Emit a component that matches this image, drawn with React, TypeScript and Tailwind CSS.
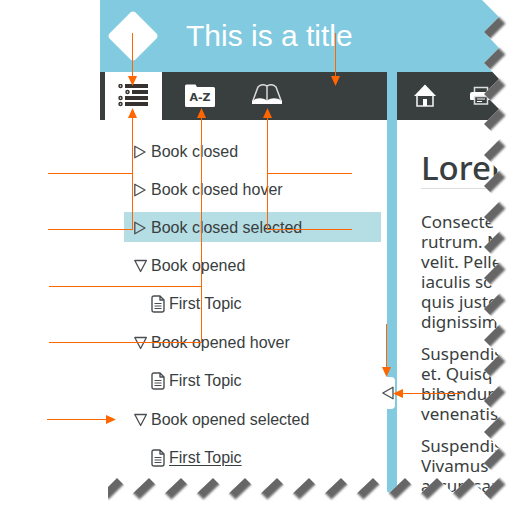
import type { ReactNode } from "react";

const paragraphs = [
  ["Consecte", "rutrum. N", "velit. Pelle", "iaculis so", "quis justo", "dignissim"],
  ["Suspendis", "et. Quisq", "bibendum", "venenatis"],
  ["Suspendis", "Vivamus", "accumsan"],
];

type Point = [number, number];

/* Each tooth is a rising edge of the torn paper: its outer tip and its inner notch. */
const sideTeeth: { tip: Point; notch: Point }[] = Array.from({ length: 15 }, (_, i) => ({
  tip: [499, Math.round(17 + i * 30.75)],
  notch: [484, Math.round(32 + i * 30.75)],
}));
const bottomTeeth: { tip: Point; notch: Point }[] = Array.from({ length: 12 }, (_, i) => ({
  tip: [i === 11 ? 102 : 453 - i * 32, 493],
  notch: [469 - i * 32, 478],
}));

const join = (points: Point[]) => points.map((p) => p.join(",")).join(" ");

const tearLine = join([
  [482, 0],
  ...sideTeeth.flatMap(({ tip, notch }) => [tip, notch]),
  [499, 478],
  [484, 493],
  ...bottomTeeth.flatMap(({ tip, notch }) => [notch, tip]),
]);

const shadowEdges = [
  ...sideTeeth.map((t) => ({ ...t, out: 5 })),
  { tip: [499, 478] as Point, notch: [484, 493] as Point, out: 5 },
  ...bottomTeeth.map((t) => ({ ...t, out: -5 })),
];

function ListIcon() {
  return (
    <svg width="30" height="24" viewBox="0 0 30 24" fill="#36322f" aria-hidden="true">
      <path d="M7 0h23v4H7zM14 6h16v4H14zM7 12h23v4H7zM7 18h23v4H7z" />
      <g fill="none" stroke="#36322f" strokeWidth="1.5">
        <circle cx="2.500" cy="2" r="1.500" />
        <circle cx="9.500" cy="8" r="1.500" />
        <circle cx="2.500" cy="14" r="1.500" />
        <circle cx="2.500" cy="20" r="1.500" />
      </g>
    </svg>
  );
}

function IndexIcon() {
  return (
    <svg width="30" height="24" viewBox="0 0 30 24" aria-hidden="true">
      <path d="M1.500 .5h9l1.500 2.500h16.500q1.500 0 1.500 1.500v17q0 1.500-1.500 1.500H1.500Q0 23 0 21.500V2Q0 .5 1.500.5z" fill="#fff" />
      <text x="15" y="17" textAnchor="middle" fontSize="11" fontWeight="700" fontFamily="DejaVu Sans, sans-serif" fill="#393e3f">
        A-Z
      </text>
    </svg>
  );
}

function GlossaryIcon() {
  return (
    <svg width="30" height="24" viewBox="0 0 30 24" fill="none" aria-hidden="true">
      <path d="M0 16.500Q8 12.500 14.500 16h1Q22 12.500 30 16.500V20H0z" fill="#fff" />
      <path d="M.8 17 6 3Q10-1 15 2 20-1 24 3L29.200 17M15 2V17" stroke="#d8d8d8" strokeWidth="1.500" />
    </svg>
  );
}

function HomeIcon() {
  return (
    <svg width="22" height="24" viewBox="0 0 22 24" aria-hidden="true">
      <path d="M11 .5 22 12H0z" fill="#fff" />
      <path d="M3 11v11h16V11" fill="none" stroke="#eee" strokeWidth="1.600" />
      <path d="M9 15h4v7H9z" fill="#fff" />
    </svg>
  );
}

function PrintIcon() {
  return (
    <svg width="24" height="20" viewBox="0 0 24 20" aria-hidden="true">
      <path d="M5.500 7V1.500h13V7" fill="none" stroke="#ddd" strokeWidth="1.500" />
      <path d="M3 6h18q2 0 2 2v6h-4v-4H5v4H2q-1 0-1-1V8q0-2 2-2z" fill="#fff" />
      <path d="M5.500 10.500h13v7.500h-13z" fill="#393e3f" stroke="#ddd" strokeWidth="1.500" />
      <path d="M8 13h8M8 15.500h5" stroke="#fff" />
    </svg>
  );
}

function ClosedMark() {
  return (
    <svg width="13" height="14" viewBox="0 0 13 14" fill="none" stroke="#4a4e50" strokeWidth="1.300" strokeLinejoin="round" aria-hidden="true">
      <path d="M.8 1.200v11.600L11 7z" />
    </svg>
  );
}

function OpenMark() {
  return (
    <svg width="13" height="14" viewBox="0 0 13 14" fill="none" stroke="#4a4e50" strokeWidth="1.300" strokeLinejoin="round" aria-hidden="true">
      <path d="M.8 1.500h11.600L6.600 12.500z" />
    </svg>
  );
}

function PageIcon() {
  return (
    <svg width="14" height="18" viewBox="0 0 14 18" fill="none" stroke="#4a4e50" strokeWidth="1.400" strokeLinejoin="round" aria-hidden="true">
      <path d="M3 1h6l4 4v10q0 2-2 2H3q-2 0-2-2V3q0-2 2-2zM9 1v4h4" />
      <path d="M3.500 8.500h7M3.500 11h7M3.500 13.500h7" strokeWidth="1.200" />
    </svg>
  );
}

function Book({ label, open = false, selected = false, children }: { label: string; open?: boolean; selected?: boolean; children?: ReactNode }) {
  return (
    <li>
      <button
        type="button"
        aria-expanded={open}
        className={`flex h-[30px] w-full items-center gap-1 pt-0.5 pl-[10px] text-left ${selected ? "bg-[#b5dde4]" : ""}`}
      >
        {open ? <OpenMark /> : <ClosedMark />}
        {label}
      </button>
      {children && <ul className="mt-2 pb-px">{children}</ul>}
    </li>
  );
}

function Topic({ current = false }: { current?: boolean }) {
  return (
    <li className="flex h-[30px] items-center gap-1 pt-0.5 pl-[27px]">
      <PageIcon />
      <a href="#topic" className={current ? "underline underline-offset-2" : ""}>
        First Topic
      </a>
    </li>
  );
}

function TornEdge() {
  return (
    <svg className="pointer-events-none absolute top-0 left-0" width="514" height="508" aria-hidden="true">
      <defs>
        <filter id="soft" x="-50%" y="-50%" width="200%" height="200%">
          <feGaussianBlur stdDeviation="1.2" />
        </filter>
        {shadowEdges.map(({ tip: [tx, ty], notch: [nx, ny], out }, i) => (
          <clipPath key={i} id={`tooth${i}`}>
            <polygon
              points={join([
                [nx, ny],
                [nx + 14, ny + 14],
                [tx + out + 14, ty - out + 14],
                [tx + out, ty - out],
              ])}
            />
          </clipPath>
        ))}
        <clipPath id="sheet">
          <rect x="108" y="0" width="406" height="508" />
        </clipPath>
      </defs>
      <polygon points={`${tearLine} 0,493 0,508 514,508 514,0`} fill="#fff" />
      <g clipPath="url(#sheet)">
        {shadowEdges.map(({ tip: [tx, ty], notch: [nx, ny], out }, i) => (
          <g key={i} clipPath={`url(#tooth${i})`}>
            <polygon
              points={join([
                [tx - 4, ty - 4],
                [nx - out - 4, ny + out - 4],
                [nx - out + 6.5, ny + out + 6.5],
                [tx + 6.5, ty + 6.5],
              ])}
              fill="#666666"
              filter="url(#soft)"
            />
          </g>
        ))}
      </g>
    </svg>
  );
}

function Callouts() {
  return (
    <svg className="pointer-events-none absolute top-0 left-0" width="514" height="508" aria-hidden="true">
      <path
        d="M132.500 33V78M132.500 117V229.500M48 173.500H132M48 229.500H133M201.500 117V342.500M49 286.500H201M49 342.500H202M267.500 117V229.500M267 173.500H352M267 229.500H352M335.500 33V78M386.500 324V369M402 393.500H462M47 419.500H108"
        fill="none"
        stroke="#ff6600"
      />
      <path
        d="M128 76h9l-4.500 10zM128 118h9l-4.500-10zM197 118h9l-4.500-10zM263 118h9l-4.500-10zM331 76h9l-4.500 10zM382 367h9l-4.500 10zM403 389v9l-10-4.500zM106 415v9l10-4.500z"
        fill="#ff6600"
      />
    </svg>
  );
}

export default function App() {
  return (
    <div className="relative h-[508px] overflow-hidden bg-white pl-[100px] font-['Liberation_Sans',Arial,sans-serif] text-base text-[#393e40]">
      <header className="flex h-[72px] items-center gap-7 bg-[#82cadf] pl-2">
        <svg width="50" height="50" viewBox="0 0 50 50" aria-hidden="true">
          <path d="M22.500 1.500q2.500-2 5 0l21 21q2 2.500 0 5l-21 21q-2.500 2-5 0l-21-21q-2-2.500 0-5z" fill="#fff" />
        </svg>
        <h1 className="text-[30px] leading-9 text-white">This is a title</h1>
      </header>

      <div className="flex">
        <aside className="w-[287px] shrink-0">
          <div className="flex h-12 gap-[10px] bg-[#393e3f] pl-[5px]">
            <button type="button" aria-label="Contents" className="flex w-[57px] items-center bg-white pl-[13px]">
              <ListIcon />
            </button>
            <button type="button" aria-label="Index" className="flex w-[57px] items-center pl-[13px]">
              <IndexIcon />
            </button>
            <button type="button" aria-label="Glossary" className="flex w-[57px] items-center pl-[13px]">
              <GlossaryIcon />
            </button>
          </div>
          <ul className="flex flex-col gap-2 pt-4 pr-[6px] pl-6">
            <Book label="Book closed" />
            <Book label="Book closed hover" />
            <Book label="Book closed selected" selected />
            <Book label="Book opened" open>
              <Topic />
            </Book>
            <Book label="Book opened hover" open>
              <Topic />
            </Book>
            <Book label="Book opened selected" open>
              <Topic current />
            </Book>
          </ul>
        </aside>

        <div className="flex h-[436px] w-[10px] shrink-0 flex-col bg-[#82cadf] pt-[305px]">
          <button type="button" aria-label="Collapse panel" className="flex h-8 w-2 items-center justify-end rounded-r bg-white pr-px">
            <svg className="shrink-0" width="12" height="14" viewBox="0 0 12 14" fill="#fff" stroke="#4a4e50" strokeWidth="1.300" strokeLinejoin="round" aria-hidden="true">
              <path d="M11 1.200v11.600L.8 7z" />
            </svg>
          </button>
        </div>

        <main className="min-w-0 flex-1 overflow-hidden">
          <div className="flex h-12 bg-[#393e3f]">
            <button type="button" aria-label="Home" className="flex w-14 shrink-0 items-center justify-center">
              <HomeIcon />
            </button>
            <button type="button" aria-label="Print" className="flex w-14 shrink-0 items-center justify-center">
              <PrintIcon />
            </button>
          </div>
          <article className="pt-7 pl-6 font-['Noto_Sans',sans-serif] whitespace-nowrap">
            <h2 className="mb-[23px] border-b border-[#dddddd] text-[33px] leading-10 font-medium">Lorer</h2>
            {paragraphs.map((lines, p) => (
              <p key={p} className="mb-3 text-[17px] leading-5">
                {lines.map((line) => (
                  <span key={line} className="block">
                    {line}
                  </span>
                ))}
              </p>
            ))}
          </article>
        </main>
      </div>

      <TornEdge />
      <Callouts />
    </div>
  );
}
